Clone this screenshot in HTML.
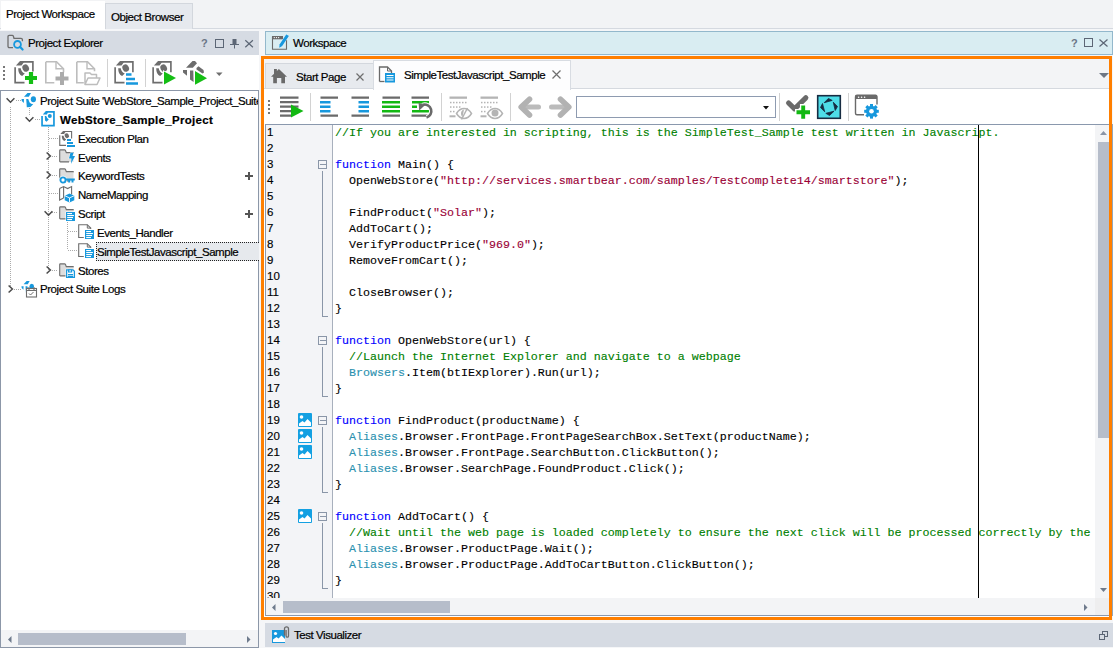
<!DOCTYPE html>
<html><head><meta charset="utf-8">
<style>
*{margin:0;padding:0;box-sizing:border-box}
html,body{width:1113px;height:648px;overflow:hidden;background:#F5F6F8;font-family:"Liberation Sans",sans-serif;font-size:11px;color:#000}
.a{position:absolute}
svg{position:absolute;overflow:visible}
.code{font-family:"Liberation Mono",monospace;font-size:11.67px;white-space:pre;line-height:16px;-webkit-text-stroke:0.12px currentColor}
.u{font-size:11.5px;letter-spacing:-0.45px;-webkit-text-stroke:0.2px #000}
.c{color:#008000}.k{color:#0000FF}.s{color:#9A0036}.t{color:#2B91AF}
</style></head><body>

<div class="a" style="left:0;top:0;width:1113px;height:29px;background:#F2F3F5;border-bottom:1px solid #D5D9E0"></div>
<div class="a" style="left:1px;top:1px;width:104px;height:29px;background:#fff"></div>
<div class="a u" style="left:6px;top:8px">Project Workspace</div>
<div class="a" style="left:105px;top:3px;width:88px;height:26px;background:#E6E9EE;border:1px solid #D3D7DD;border-bottom:none"></div>
<div class="a u" style="left:111px;top:11px">Object Browser</div>
<div class="a" style="left:0;top:31px;width:259px;height:24px;background:#D6DBE3"></div>
<div class="a u" style="left:28px;top:37px">Project Explorer</div>
<div class="a" style="left:0;top:55px;width:259px;height:35px;background:#fff"></div>
<div class="a" style="left:0;top:90px;width:259px;height:558px;background:#fff;border:1px solid #8C97A8"></div>
<svg style="left:7px;top:35px" width="16" height="16" viewBox="0 0 16 16"><path d="M6 12.6H2.4Q1 12.6 1 11.2V1.6Q1 0.3 2.3 0.3H5.3Q6 0.3 6.3 1L7 3.3H14Q15.4 3.3 15.4 4.7V6.2" fill="none" stroke="#6D6D6D" stroke-width="1.3"/><circle cx="10.5" cy="9.4" r="3.4" fill="none" stroke="#1798DD" stroke-width="1.8"/><path d="M12.9 11.8l2.7 2.7" stroke="#1798DD" stroke-width="2.2" stroke-linecap="round"/></svg>
<div class="a" style="left:201px;top:37px;color:#6B7585;font-size:11px;font-weight:bold">?</div>
<svg style="left:215px;top:39px" width="10" height="10"><rect x="0.5" y="0.5" width="8" height="8" fill="none" stroke="#5C6675" stroke-width="1"/></svg>
<svg style="left:230px;top:39px" width="10" height="10"><rect x="2.5" y="0" width="4" height="5" fill="#5C6675"/><path d="M0 5.5h9M4.5 5v4.5" stroke="#5C6675" stroke-width="1"/></svg>
<svg style="left:245px;top:40px" width="9" height="8"><path d="M0.3 0.3l7.6 7M7.9 0.3l-7.6 7" stroke="#5C6675" stroke-width="1.2"/></svg>
<div class="a" style="left:3px;top:66px;width:2px;height:2px;background:#777"></div>
<div class="a" style="left:3px;top:70px;width:2px;height:2px;background:#777"></div>
<div class="a" style="left:3px;top:74px;width:2px;height:2px;background:#777"></div>
<div class="a" style="left:3px;top:78px;width:2px;height:2px;background:#777"></div>
<svg style="left:14px;top:61px;color:#6D6D6D" width="26" height="26" viewBox="0 0 26 26"><svg x="0" y="0" width="24" height="24" viewBox="0 0 16 16" style="position:static;overflow:visible"><path d="M4 0.55H12.6V7.5" fill="none" stroke="currentColor" stroke-width="1.1"/><path d="M1.3 3L4 0H7.2L5 3z" fill="currentColor"/><path d="M0.75 4.2V14.4H7" fill="none" stroke="currentColor" stroke-width="1.1"/><ellipse cx="7.8" cy="4.7" rx="2.1" ry="2.5" transform="rotate(-30 7.8 4.7)" fill="currentColor"/><path d="M2.8 4.8H4.5Q4.9 7.4 7.2 8.4L5.4 10Q2.8 9.2 2.8 4.8z" fill="currentColor"/></svg><path d="M19 10.5v13M12.5 17h13" stroke="#fff" stroke-width="6"/><path d="M17 11v12M11 17h12" stroke="#14BE14" stroke-width="4.2"/></svg>
<svg style="left:45px;top:61px" width="26" height="25" viewBox="0 0 26 25"><path d="M1 0.8h10.5l7 7v3.5M0.8 0.8v21h8.5" fill="none" stroke="#BDBDBD" stroke-width="1.6"/><path d="M11 0.8v7h7" fill="none" stroke="#BDBDBD" stroke-width="1.4"/><path d="M17 11v13M10.5 17.5h13" stroke="#ABABAB" stroke-width="4"/></svg>
<svg style="left:76px;top:61px" width="26" height="25" viewBox="0 0 26 25"><path d="M1 0.8h10.5l7 7v2.5M0.8 0.8v21h7" fill="none" stroke="#BDBDBD" stroke-width="1.6"/><path d="M11 0.8v7h7" fill="none" stroke="#BDBDBD" stroke-width="1.4"/><path d="M9 23.5V12h5l1.5 1.5h5v3M9 23.5l3-6.5h12l-3 6.5z" fill="#fff" stroke="#BDBDBD" stroke-width="1.5" stroke-linejoin="round"/></svg>
<div class="a" style="left:107px;top:59px;width:1px;height:28px;background:#D2D2D2"></div>
<svg style="left:114px;top:61px;color:#6D6D6D" width="26" height="26" viewBox="0 0 26 26"><svg x="0" y="0" width="24" height="24" viewBox="0 0 16 16" style="position:static;overflow:visible"><path d="M4 0.55H12.6V7.5" fill="none" stroke="currentColor" stroke-width="1.1"/><path d="M1.3 3L4 0H7.2L5 3z" fill="currentColor"/><path d="M0.75 4.2V14.4H7" fill="none" stroke="currentColor" stroke-width="1.1"/><ellipse cx="7.8" cy="4.7" rx="2.1" ry="2.5" transform="rotate(-30 7.8 4.7)" fill="currentColor"/><path d="M2.8 4.8H4.5Q4.9 7.4 7.2 8.4L5.4 10Q2.8 9.2 2.8 4.8z" fill="currentColor"/></svg><path d="M12 13.5h5.5M12 18h9M12 22.5h12" stroke="#1798DD" stroke-width="2.6"/></svg>
<div class="a" style="left:145px;top:59px;width:1px;height:28px;background:#D2D2D2"></div>
<svg style="left:152px;top:61px;color:#6D6D6D" width="26" height="26" viewBox="0 0 26 26"><svg x="0" y="0" width="24" height="24" viewBox="0 0 16 16" style="position:static;overflow:visible"><path d="M4 0.55H12.6V7.5" fill="none" stroke="currentColor" stroke-width="1.1"/><path d="M1.3 3L4 0H7.2L5 3z" fill="currentColor"/><path d="M0.75 4.2V14.4H7" fill="none" stroke="currentColor" stroke-width="1.1"/><ellipse cx="7.8" cy="4.7" rx="2.1" ry="2.5" transform="rotate(-30 7.8 4.7)" fill="currentColor"/><path d="M2.8 4.8H4.5Q4.9 7.4 7.2 8.4L5.4 10Q2.8 9.2 2.8 4.8z" fill="currentColor"/></svg><path d="M11 9l14 8-14 8z" fill="#fff"/><path d="M12 10.5l12 6.5-12 6.5z" fill="#14BE14"/></svg>
<svg style="left:180px;top:58px" width="30" height="30" viewBox="0 0 30 30"><path d="M6 9.7L12.5 3H15L17 5.3 12.8 9.7z" fill="#6D6D6D"/><path d="M3 12H7V17.8L3 14.5z" fill="#6D6D6D"/><path d="M10 12.5H13.3L13.6 24 10 21.5z" fill="#6D6D6D"/><path d="M16.5 10L18.5 8.2 23.5 12 24 14.5 22.5 15.5 16.5 11.5z" fill="#6D6D6D"/><path d="M15 13L27 20.3 15 26.8z" fill="#14BE14"/></svg>
<svg style="left:216px;top:72px" width="7" height="5"><path d="M0 0.5h6.5L3.25 4z" fill="#6E6E6E"/></svg>
<div class="a" style="left:10px;top:107px;width:1px;height:182px;background:repeating-linear-gradient(#ABABAB 0 1px,transparent 1px 2px)"></div>
<div class="a" style="left:29px;top:108px;width:1px;height:8px;background:repeating-linear-gradient(#ABABAB 0 1px,transparent 1px 2px)"></div>
<div class="a" style="left:48px;top:127px;width:1px;height:144px;background:repeating-linear-gradient(#ABABAB 0 1px,transparent 1px 2px)"></div>
<div class="a" style="left:67px;top:222px;width:1px;height:28px;background:repeating-linear-gradient(#ABABAB 0 1px,transparent 1px 2px)"></div>
<div class="a" style="left:16px;top:100px;width:5px;height:1px;background:repeating-linear-gradient(90deg,#ABABAB 0 1px,transparent 1px 2px)"></div>
<div class="a" style="left:35px;top:119px;width:5px;height:1px;background:repeating-linear-gradient(90deg,#ABABAB 0 1px,transparent 1px 2px)"></div>
<div class="a" style="left:49px;top:138px;width:9px;height:1px;background:repeating-linear-gradient(90deg,#ABABAB 0 1px,transparent 1px 2px)"></div>
<div class="a" style="left:52px;top:156px;width:6px;height:1px;background:repeating-linear-gradient(90deg,#ABABAB 0 1px,transparent 1px 2px)"></div>
<div class="a" style="left:52px;top:175px;width:6px;height:1px;background:repeating-linear-gradient(90deg,#ABABAB 0 1px,transparent 1px 2px)"></div>
<div class="a" style="left:49px;top:193px;width:9px;height:1px;background:repeating-linear-gradient(90deg,#ABABAB 0 1px,transparent 1px 2px)"></div>
<div class="a" style="left:52px;top:212px;width:6px;height:1px;background:repeating-linear-gradient(90deg,#ABABAB 0 1px,transparent 1px 2px)"></div>
<div class="a" style="left:52px;top:270px;width:6px;height:1px;background:repeating-linear-gradient(90deg,#ABABAB 0 1px,transparent 1px 2px)"></div>
<div class="a" style="left:68px;top:231px;width:10px;height:1px;background:repeating-linear-gradient(90deg,#ABABAB 0 1px,transparent 1px 2px)"></div>
<div class="a" style="left:68px;top:250px;width:10px;height:1px;background:repeating-linear-gradient(90deg,#ABABAB 0 1px,transparent 1px 2px)"></div>
<div class="a" style="left:14px;top:289px;width:7px;height:1px;background:repeating-linear-gradient(90deg,#ABABAB 0 1px,transparent 1px 2px)"></div>
<svg style="left:6px;top:98px" width="9" height="5"><svg x="0" y="0" width="100%" height="100%" viewBox="0 0 9 5" style="position:static;overflow:visible"><path d="M0.6 0.3l3.9 3.9 3.9-3.9" fill="none" stroke="#4A4A4A" stroke-width="1.5"/></svg></svg>
<svg style="left:25px;top:117px" width="9" height="5"><svg x="0" y="0" width="100%" height="100%" viewBox="0 0 9 5" style="position:static;overflow:visible"><path d="M0.6 0.3l3.9 3.9 3.9-3.9" fill="none" stroke="#4A4A4A" stroke-width="1.5"/></svg></svg>
<svg style="left:46px;top:152px" width="5" height="8"><svg x="0" y="0" width="100%" height="100%" viewBox="0 0 5 8" style="position:static;overflow:visible"><path d="M0.6 0.5l3.8 3.5-3.8 3.5" fill="none" stroke="#4A4A4A" stroke-width="1.5"/></svg></svg>
<svg style="left:46px;top:171px" width="5" height="8"><svg x="0" y="0" width="100%" height="100%" viewBox="0 0 5 8" style="position:static;overflow:visible"><path d="M0.6 0.5l3.8 3.5-3.8 3.5" fill="none" stroke="#4A4A4A" stroke-width="1.5"/></svg></svg>
<svg style="left:44px;top:211px" width="9" height="5"><svg x="0" y="0" width="100%" height="100%" viewBox="0 0 9 5" style="position:static;overflow:visible"><path d="M0.6 0.3l3.9 3.9 3.9-3.9" fill="none" stroke="#4A4A4A" stroke-width="1.5"/></svg></svg>
<svg style="left:46px;top:266px" width="5" height="8"><svg x="0" y="0" width="100%" height="100%" viewBox="0 0 5 8" style="position:static;overflow:visible"><path d="M0.6 0.5l3.8 3.5-3.8 3.5" fill="none" stroke="#4A4A4A" stroke-width="1.5"/></svg></svg>
<svg style="left:8px;top:285px" width="5" height="8"><svg x="0" y="0" width="100%" height="100%" viewBox="0 0 5 8" style="position:static;overflow:visible"><path d="M0.6 0.5l3.8 3.5-3.8 3.5" fill="none" stroke="#4A4A4A" stroke-width="1.5"/></svg></svg>
<svg style="left:21px;top:93px;color:#1798DD" width="15" height="15" viewBox="0 0 15 15"><svg x="0" y="0" width="100%" height="100%" viewBox="0 0 15 15" style="position:static;overflow:visible"><path d="M3 3.8L6.5 0H10L7.8 3.8z" fill="currentColor"/><path d="M0.5 6H3L2.8 10 0.8 8z" fill="currentColor"/><path d="M5.2 6H7.2L8.6 9.4Q9.8 10.8 12.2 11.3L9.4 14 5.8 14.3z" fill="currentColor"/><ellipse cx="12.4" cy="6.2" rx="2.6" ry="3" fill="currentColor"/></svg></svg>
<svg style="left:41px;top:111px" width="15" height="16" viewBox="0 0 15 16"><path d="M4.9 0.95H12.95V14.65H1.05V5" fill="none" stroke="#1798DD" stroke-width="1.7"/><path d="M1.8 3.6L4.9 0.1H7.5L6 3.5z" fill="#1798DD"/><path d="M3.8 5H5.2Q6 7.5 7.8 8.5L5.5 10.7 4 9.5z" fill="#1798DD"/><ellipse cx="8.8" cy="5" rx="2" ry="2.1" fill="#1798DD"/></svg>
<svg style="left:59px;top:131px;color:#6D6D6D" width="17" height="17" viewBox="0 0 17 17"><svg x="0" y="0" width="16" height="16" viewBox="0 0 16 16" style="position:static;overflow:visible"><path d="M4 0.55H12.6V7.5" fill="none" stroke="currentColor" stroke-width="1.1"/><path d="M1.3 3L4 0H7.2L5 3z" fill="currentColor"/><path d="M0.75 4.2V14.4H7" fill="none" stroke="currentColor" stroke-width="1.1"/><ellipse cx="7.8" cy="4.7" rx="2.1" ry="2.5" transform="rotate(-30 7.8 4.7)" fill="currentColor"/><path d="M2.8 4.8H4.5Q4.9 7.4 7.2 8.4L5.4 10Q2.8 9.2 2.8 4.8z" fill="currentColor"/></svg><path d="M8 9h4M8 12h6M8 15h8" stroke="#1798DD" stroke-width="1.8"/></svg>
<svg style="left:59px;top:149px" width="16" height="16" viewBox="0 0 16 16"><svg x="0" y="0" width="100%" height="100%" viewBox="0 0 16 16" style="position:static;overflow:visible"><path d="M0.7 12.9V1.5Q0.7 0.9 1.3 0.9H5.6Q6.2 0.9 6.5 1.5L7.3 3.6H13.8Q14.5 3.6 14.5 4.3V12.9z" fill="#DDDDDD"/><path d="M14.5 4.3Q14.5 3.6 13.8 3.6H7.3L6.5 1.5Q6.2 0.9 5.6 0.9H1.3Q0.7 0.9 0.7 1.5V12.3Q0.7 12.9 1.3 12.9H10" fill="none" stroke="#6D6D6D" stroke-width="1.1"/></svg><path d="M11.5 3.8H14.5L13.5 7H16L12 14.8 12.5 9.5H10z" fill="#1798DD" stroke="#fff" stroke-width="0.9" stroke-linejoin="round"/><path d="M11.5 3.8H14.5L13.5 7H16L12 14.8 12.5 9.5H10z" fill="#1798DD"/></svg>
<svg style="left:59px;top:168px" width="16" height="16" viewBox="0 0 16 16"><svg x="0" y="0" width="100%" height="100%" viewBox="0 0 16 16" style="position:static;overflow:visible"><path d="M0.7 12.9V1.5Q0.7 0.9 1.3 0.9H5.6Q6.2 0.9 6.5 1.5L7.3 3.6H13.8Q14.5 3.6 14.5 4.3V12.9z" fill="#DDDDDD"/><path d="M14.5 4.3Q14.5 3.6 13.8 3.6H7.3L6.5 1.5Q6.2 0.9 5.6 0.9H1.3Q0.7 0.9 0.7 1.5V12.3Q0.7 12.9 1.3 12.9H10" fill="none" stroke="#6D6D6D" stroke-width="1.1"/></svg><circle cx="4" cy="12" r="3" fill="#fff" stroke="#fff" stroke-width="2.5"/><circle cx="4" cy="12" r="2.6" fill="#fff" stroke="#1798DD" stroke-width="1.9"/><path d="M6.5 11.5h9.3M10.2 11.5v3M13.5 11.5v3" stroke="#1798DD" stroke-width="2"/></svg>
<svg style="left:59px;top:186px" width="16" height="16" viewBox="0 0 16 16"><path d="M0.6 2.6l4-2 4 2 4-2v8M0.6 2.6V14l4-2M4.6 0.6v11.4" fill="none" stroke="#6D6D6D" stroke-width="1.1"/><path d="M10.5 7.5l4.8 2.2v4.6l-4.8 2.2-4.8-2.2V9.7z" fill="#1798DD"/><path d="M5.7 9.7l4.8 2.2 4.8-2.2M10.5 11.9v4.4" stroke="#fff" stroke-width="0.9" fill="none"/></svg>
<svg style="left:59px;top:206px" width="16" height="16" viewBox="0 0 16 16"><svg x="0" y="0" width="100%" height="100%" viewBox="0 0 16 16" style="position:static;overflow:visible"><path d="M0.7 12.9V1.5Q0.7 0.9 1.3 0.9H5.6Q6.2 0.9 6.5 1.5L7.3 3.6H13.8Q14.5 3.6 14.5 4.3V12.9z" fill="#DDDDDD"/><path d="M14.5 4.3Q14.5 3.6 13.8 3.6H7.3L6.5 1.5Q6.2 0.9 5.6 0.9H1.3Q0.7 0.9 0.7 1.5V12.3Q0.7 12.9 1.3 12.9H10" fill="none" stroke="#6D6D6D" stroke-width="1.1"/></svg><rect x="6.5" y="5.5" width="10" height="10" fill="#fff"/><rect x="7" y="6" width="9" height="9" fill="#1798DD"/><rect x="8.2" y="7" width="4.8" height="1.1" fill="#fff"/><rect x="8.2" y="9" width="6.7" height="1.1" fill="#fff"/><rect x="8.2" y="11" width="5.8" height="1.1" fill="#fff"/><rect x="8.2" y="13" width="4.8" height="1.1" fill="#fff"/></svg>
<svg style="left:78px;top:224px" width="16" height="16" viewBox="0 0 16 16"><svg x="0" y="0" width="100%" height="100%" viewBox="0 0 16 16" style="position:static;overflow:visible"><path d="M5.8 13.5H0.7V0.7H9.3L12.7 4.1V5" fill="#fff" stroke="#6D6D6D" stroke-width="1.1"/><path d="M9.3 0.7V4.1H12.7" fill="none" stroke="#6D6D6D" stroke-width="1"/><rect x="6.5" y="5.5" width="10" height="10" fill="#fff"/><rect x="7" y="6" width="9" height="9" fill="#1798DD"/><rect x="8.2" y="7" width="4.8" height="1.1" fill="#fff"/><rect x="8.2" y="9" width="6.7" height="1.1" fill="#fff"/><rect x="8.2" y="11" width="5.8" height="1.1" fill="#fff"/><rect x="8.2" y="13" width="4.8" height="1.1" fill="#fff"/></svg></svg>
<svg style="left:78px;top:243px" width="16" height="16" viewBox="0 0 16 16"><svg x="0" y="0" width="100%" height="100%" viewBox="0 0 16 16" style="position:static;overflow:visible"><path d="M5.8 13.5H0.7V0.7H9.3L12.7 4.1V5" fill="#fff" stroke="#6D6D6D" stroke-width="1.1"/><path d="M9.3 0.7V4.1H12.7" fill="none" stroke="#6D6D6D" stroke-width="1"/><rect x="6.5" y="5.5" width="10" height="10" fill="#fff"/><rect x="7" y="6" width="9" height="9" fill="#1798DD"/><rect x="8.2" y="7" width="4.8" height="1.1" fill="#fff"/><rect x="8.2" y="9" width="6.7" height="1.1" fill="#fff"/><rect x="8.2" y="11" width="5.8" height="1.1" fill="#fff"/><rect x="8.2" y="13" width="4.8" height="1.1" fill="#fff"/></svg></svg>
<svg style="left:59px;top:263px" width="16" height="16" viewBox="0 0 16 16"><svg x="0" y="0" width="100%" height="100%" viewBox="0 0 16 16" style="position:static;overflow:visible"><path d="M0.7 12.9V1.5Q0.7 0.9 1.3 0.9H5.6Q6.2 0.9 6.5 1.5L7.3 3.6H13.8Q14.5 3.6 14.5 4.3V12.9z" fill="#DDDDDD"/><path d="M14.5 4.3Q14.5 3.6 13.8 3.6H7.3L6.5 1.5Q6.2 0.9 5.6 0.9H1.3Q0.7 0.9 0.7 1.5V12.3Q0.7 12.9 1.3 12.9H10" fill="none" stroke="#6D6D6D" stroke-width="1.1"/></svg><rect x="6.5" y="5.8" width="10" height="9.7" fill="#fff"/><path d="M7.6 6.9H14L15.4 8.3V14.4H7.6z" fill="none" stroke="#1798DD" stroke-width="1.3"/><rect x="9" y="6.5" width="4.2" height="3" fill="#1798DD"/><rect x="10.6" y="7" width="1" height="1.8" fill="#fff"/><path d="M9 11.5H14" stroke="#1798DD" stroke-width="1"/><rect x="9" y="12.6" width="5" height="1.4" fill="#1798DD"/></svg>
<svg style="left:21px;top:281px" width="17" height="17" viewBox="0 0 17 17"><g style="color:#1798DD"><svg x="0" y="0" width="13" height="13" viewBox="0 0 15 15" style="position:static;overflow:visible"><path d="M3 3.8L6.5 0H10L7.8 3.8z" fill="currentColor"/><path d="M0.5 6H3L2.8 10 0.8 8z" fill="currentColor"/><path d="M5.2 6H7.2L8.6 9.4Q9.8 10.8 12.2 11.3L9.4 14 5.8 14.3z" fill="currentColor"/><ellipse cx="12.4" cy="6.2" rx="2.6" ry="3" fill="currentColor"/></svg></g><rect x="5.5" y="7.5" width="10" height="8.5" fill="#fff" stroke="#6D6D6D" stroke-width="1.1"/><path d="M5.5 9.5h10M8 6v3M13 6v3" stroke="#6D6D6D" stroke-width="1.1"/><path d="M8 12.5l1.5 1.5 3-3" fill="none" stroke="#6D6D6D" stroke-width="1"/></svg>
<div class="a" style="left:96px;top:242px;width:163px;height:19px;background:#E6E9ED;border:1px dotted #222;border-right:none"></div>
<svg style="left:245px;top:172px" width="8" height="8"><path d="M0 3h8v2H0zM3 0h2v8H3z" fill="#555"/></svg>
<svg style="left:245px;top:210px" width="8" height="8"><path d="M0 3h8v2H0zM3 0h2v8H3z" fill="#555"/></svg>
<div class="a" style="left:1px;top:92px;width:257px;height:210px;overflow:hidden">
<div class="a u" style="left:39px;top:0px;line-height:19px;white-space:nowrap;">Project Suite 'WebStore_Sample_Project_Suite'</div>
<div class="a u" style="left:59px;top:19px;line-height:19px;white-space:nowrap;font-weight:bold;letter-spacing:0.3px;">WebStore_Sample_Project</div>
<div class="a u" style="left:77px;top:38px;line-height:19px;white-space:nowrap;">Execution Plan</div>
<div class="a u" style="left:77px;top:57px;line-height:19px;white-space:nowrap;">Events</div>
<div class="a u" style="left:77px;top:75px;line-height:19px;white-space:nowrap;">KeywordTests</div>
<div class="a u" style="left:77px;top:94px;line-height:19px;white-space:nowrap;">NameMapping</div>
<div class="a u" style="left:77px;top:113px;line-height:19px;white-space:nowrap;">Script</div>
<div class="a u" style="left:96px;top:132px;line-height:19px;white-space:nowrap;">Events_Handler</div>
<div class="a u" style="left:96px;top:151px;line-height:19px;white-space:nowrap;">SimpleTestJavascript_Sample</div>
<div class="a u" style="left:77px;top:170px;line-height:19px;white-space:nowrap;">Stores</div>
<div class="a u" style="left:39px;top:188px;line-height:19px;white-space:nowrap;">Project Suite Logs</div>
</div>
<div class="a" style="left:1px;top:630px;width:257px;height:17px;background:#F3F4F6"></div>
<div class="a" style="left:18px;top:633px;width:168px;height:12px;background:#B6BDCA"></div>
<svg style="left:8px;top:636px" width="4" height="7"><path d="M3.5 0v7L0 3.5z" fill="#6E7A8C"/></svg>
<svg style="left:247px;top:636px" width="4" height="7"><path d="M0 0v7l3.5-3.5z" fill="#6E7A8C"/></svg>
<!-- workspace header -->
<div class="a" style="left:265px;top:31px;width:848px;height:24px;background:#D9EDF2;border:1px solid #93B8CC"></div>
<svg style="left:272px;top:34px" width="18" height="16" viewBox="0 0 18 16"><path d="M0.5 2.5V15.3H14.5V6" fill="none" stroke="#6A6A6A" stroke-width="1.1"/><rect x="0" y="2" width="11" height="3.3" fill="#6A6A6A"/><circle cx="2.3" cy="3.6" r="0.65" fill="#fff"/><circle cx="4.5" cy="3.6" r="0.65" fill="#fff"/><circle cx="6.6" cy="3.6" r="0.65" fill="#fff"/><path d="M14.3 0.5L16.8 2.1L10.1 12L7.3 13.8L7.6 10.6z" fill="#1798DD" stroke="#E2F3F7" stroke-width="0.8" stroke-linejoin="round"/><path d="M14.3 0.5L16.8 2.1L10.1 12L7.3 13.8L7.6 10.6z" fill="#1798DD"/></svg>
<div class="a u" style="left:293px;top:37px">Workspace</div>
<div class="a" style="left:1071px;top:37px;color:#6B7585;font-size:11px;font-weight:bold">?</div>
<svg style="left:1084px;top:38px" width="10" height="10"><rect x="0.5" y="0.5" width="8" height="8" fill="none" stroke="#5C6675" stroke-width="1"/></svg>
<svg style="left:1099px;top:39px" width="9" height="8"><path d="M0.5 0.5l8 7M8.5 0.5l-8 7" stroke="#5C6675" stroke-width="1.2"/></svg>
<div class="a" style="left:261px;top:56px;width:851px;height:564px;border:3px solid #FF7F00;background:#fff"></div>
<div class="a" style="left:1112px;top:124px;width:1px;height:492px;background:#93A6BA"></div>
<div class="a" style="left:264px;top:59px;width:845px;height:30px;background:#F3F4F6;border-bottom:1px solid #D5D9DF"></div>
<div class="a" style="left:265px;top:63px;width:109px;height:25px;background:#E7EAEE;border:1px solid #D3D7DD;border-bottom:none"></div>
<svg style="left:271px;top:68px" width="17" height="16" viewBox="0 0 17 16"><path d="M0 8.8L7.9 1 16 8.8H14V15.3H10.3V10H5.9V15.3H2.2V8.8z M3 1H5.9V4L3 6.8z" fill="#6A6A6A"/></svg>
<div class="a u" style="left:296px;top:71px">Start Page</div>
<svg style="left:356px;top:73px" width="8" height="8"><path d="M0.5 0.5l7 7M7.5 0.5l-7 7" stroke="#6E6E6E" stroke-width="1.2"/></svg>
<div class="a" style="left:373px;top:60px;width:198px;height:29px;background:#FDFDFE;border:1px solid #D8DCE2;border-bottom:none"></div>
<svg style="left:378px;top:66px" width="18" height="17" viewBox="0 0 18 17"><path d="M1.5 15.5V1h8l4 4v2.5" fill="none" stroke="#6A6A6A" stroke-width="1.3"/><path d="M9.5 1v4h4" fill="none" stroke="#6A6A6A" stroke-width="1"/><path d="M1.5 15.5h5" stroke="#6A6A6A" stroke-width="1.3"/><rect x="7" y="7" width="10" height="9.5" fill="#1798DD"/><path d="M8.5 9.5h7M8.5 11.8h7M8.5 14h7" stroke="#fff" stroke-width="1.1"/></svg>
<div class="a u" style="left:404px;top:69px">SimpleTestJavascript_Sample</div>
<svg style="left:552px;top:70px" width="9" height="9"><path d="M0.5 0.5l8 8M8.5 0.5l-8 8" stroke="#6E6E6E" stroke-width="1.2"/></svg>
<svg style="left:1099px;top:73px" width="10" height="6"><path d="M0 0h10L5 5z" fill="#6E7785"/></svg>
<div class="a" style="left:264px;top:89px;width:845px;height:35px;background:#fff"></div>
<div class="a" style="left:373px;top:88px;width:198px;height:2px;background:#FDFDFE;border-left:1px solid #D8DCE2;border-right:1px solid #D8DCE2"></div>
<div class="a" style="left:268px;top:100px;width:2px;height:2px;background:#777"></div>
<div class="a" style="left:268px;top:104px;width:2px;height:2px;background:#777"></div>
<div class="a" style="left:268px;top:108px;width:2px;height:2px;background:#777"></div>
<div class="a" style="left:268px;top:112px;width:2px;height:2px;background:#777"></div>
<svg style="left:280px;top:95px" width="24" height="24" viewBox="0 0 24 24"><path d="M0 2.65h18.5M0 7.15h18.5M0 11.65h18.5M0 16.15h11M0 20.65h11" stroke="#6A6A6A" stroke-width="2.3"/><path d="M11 9.5l12.5 6.5-12.5 6.5z" fill="#12B812"/></svg>
<div class="a" style="left:310px;top:93px;width:1px;height:28px;background:#D2D2D2"></div>
<svg style="left:320px;top:95px" width="24" height="24" viewBox="0 0 24 24"><path d="M0.5 2.65h17.5M0.5 20.65h17.5" stroke="#6A6A6A" stroke-width="2.4"/><path d="M0 7.15h10.5M0 11.65h10.5M0 16.15h10.5" stroke="#1798DD" stroke-width="2.5"/></svg>
<svg style="left:351px;top:95px" width="24" height="24" viewBox="0 0 24 24"><path d="M0.5 2.65h17.5M0.5 20.65h17.5" stroke="#6A6A6A" stroke-width="2.4"/><path d="M7.5 7.15h10.5M7.5 11.65h10.5M7.5 16.15h10.5" stroke="#1798DD" stroke-width="2.5"/></svg>
<svg style="left:382px;top:95px" width="24" height="24" viewBox="0 0 24 24"><path d="M0.5 2.65h17.5M0.5 20.65h17.5" stroke="#6A6A6A" stroke-width="2.4"/><path d="M0 7.15h18M0 11.65h18M0 16.15h18" stroke="#12B812" stroke-width="2.5"/></svg>
<svg style="left:411px;top:95px" width="24" height="24" viewBox="0 0 24 24"><path d="M0.5 2.65h17.5M0.5 20.65h17.5" stroke="#6A6A6A" stroke-width="2.4"/><path d="M1 7.15h17M1 11.65h17M1 16.15h17" stroke="#12B812" stroke-width="2.5"/><rect x="6" y="9.5" width="13" height="4.5" fill="#fff"/><path d="M11.8 9.8A6 6 0 1 1 15.5 22.6" fill="none" stroke="#fff" stroke-width="4.5"/><path d="M11.8 9.8A6 6 0 1 1 15.5 22.6" fill="none" stroke="#6A6A6A" stroke-width="2.6"/><path d="M7.6 7.8L8.2 15.6 14.2 10z" fill="#6A6A6A"/></svg>
<div class="a" style="left:441px;top:93px;width:1px;height:28px;background:#D2D2D2"></div>
<svg style="left:449px;top:96px" width="24" height="24" viewBox="0 0 24 24"><path d="M0.5 1.65h17.5" stroke="#B4B4B4" stroke-width="2.3"/><rect x="1" y="5.8" width="1.5" height="1.5" fill="#B4B4B4"/><rect x="4" y="5.8" width="1.5" height="1.5" fill="#B4B4B4"/><rect x="7" y="5.8" width="1.5" height="1.5" fill="#B4B4B4"/><rect x="10" y="5.8" width="1.5" height="1.5" fill="#B4B4B4"/><rect x="13" y="5.8" width="1.5" height="1.5" fill="#B4B4B4"/><rect x="16" y="5.8" width="1.5" height="1.5" fill="#B4B4B4"/><rect x="1" y="10.3" width="1.5" height="1.5" fill="#B4B4B4"/><rect x="4" y="10.3" width="1.5" height="1.5" fill="#B4B4B4"/><rect x="7" y="10.3" width="1.5" height="1.5" fill="#B4B4B4"/><rect x="10" y="10.3" width="1.5" height="1.5" fill="#B4B4B4"/><rect x="1" y="14.8" width="1.5" height="1.5" fill="#B4B4B4"/><rect x="4" y="14.8" width="1.5" height="1.5" fill="#B4B4B4"/><path d="M0.5 20.3h6" stroke="#B4B4B4" stroke-width="2"/><path d="M7.5 17.5c2-3.3 4.6-5 7.5-5s5.5 1.7 7.5 5c-2 3.3-4.6 5-7.5 5s-5.5-1.7-7.5-5z" fill="#fff" stroke="#fff" stroke-width="3"/><path d="M7.5 17.5c2-3.3 4.6-5 7.5-5s5.5 1.7 7.5 5c-2 3.3-4.6 5-7.5 5s-5.5-1.7-7.5-5z" fill="none" stroke="#B4B4B4" stroke-width="1.5"/><path d="M15 13.5c-2 0.5-3 2-3 4s0.8 3 1.5 3.5z" fill="#B4B4B4"/><path d="M18.5 12L12.5 23.5" stroke="#B4B4B4" stroke-width="1.5"/></svg>
<svg style="left:480px;top:96px" width="24" height="24" viewBox="0 0 24 24"><path d="M0.5 1.65h17.5" stroke="#B4B4B4" stroke-width="2.3"/><rect x="1" y="5.8" width="1.5" height="1.5" fill="#B4B4B4"/><rect x="4" y="5.8" width="1.5" height="1.5" fill="#B4B4B4"/><rect x="7" y="5.8" width="1.5" height="1.5" fill="#B4B4B4"/><rect x="10" y="5.8" width="1.5" height="1.5" fill="#B4B4B4"/><rect x="13" y="5.8" width="1.5" height="1.5" fill="#B4B4B4"/><rect x="16" y="5.8" width="1.5" height="1.5" fill="#B4B4B4"/><rect x="1" y="10.3" width="1.5" height="1.5" fill="#B4B4B4"/><rect x="4" y="10.3" width="1.5" height="1.5" fill="#B4B4B4"/><rect x="7" y="10.3" width="1.5" height="1.5" fill="#B4B4B4"/><rect x="10" y="10.3" width="1.5" height="1.5" fill="#B4B4B4"/><rect x="1" y="14.8" width="1.5" height="1.5" fill="#B4B4B4"/><rect x="4" y="14.8" width="1.5" height="1.5" fill="#B4B4B4"/><path d="M0.5 20.3h6" stroke="#B4B4B4" stroke-width="2"/><path d="M7.5 17.5c2-3.3 4.6-5 7.5-5s5.5 1.7 7.5 5c-2 3.3-4.6 5-7.5 5s-5.5-1.7-7.5-5z" fill="#fff" stroke="#fff" stroke-width="3"/><path d="M7.5 17.5c2-3.3 4.6-5 7.5-5s5.5 1.7 7.5 5c-2 3.3-4.6 5-7.5 5s-5.5-1.7-7.5-5z" fill="none" stroke="#B4B4B4" stroke-width="1.5"/><circle cx="15" cy="17" r="3.5" fill="#B4B4B4"/></svg>
<div class="a" style="left:510px;top:93px;width:1px;height:28px;background:#D2D2D2"></div>
<svg style="left:518px;top:97px" width="23" height="22" viewBox="0 0 23 22"><path d="M20.5 10H8" fill="none" stroke="#BBBBBB" stroke-width="5" stroke-linecap="round"/><path d="M11.5 2.2L3.2 10l8.3 8" fill="none" stroke="#B2B2B2" stroke-width="5.6" stroke-linejoin="round" stroke-linecap="round"/></svg>
<svg style="left:549px;top:97px" width="23" height="22" viewBox="0 0 23 22"><path d="M2.5 10H15" fill="none" stroke="#BBBBBB" stroke-width="5" stroke-linecap="round"/><path d="M11.5 2.2L19.8 10l-8.3 8" fill="none" stroke="#B2B2B2" stroke-width="5.6" stroke-linejoin="round" stroke-linecap="round"/></svg>
<div class="a" style="left:576px;top:96px;width:200px;height:22px;background:#fff;border:1px solid #8E9BB0"></div>
<svg style="left:763px;top:106px" width="6" height="4"><path d="M0 0h6L3 3.5z" fill="#111"/></svg>
<div class="a" style="left:779px;top:93px;width:1px;height:28px;background:#D2D2D2"></div>
<svg style="left:786px;top:95px" width="25" height="25" viewBox="0 0 25 25"><path d="M2.6 8l6 5.8L19.8 2.8" fill="none" stroke="#6A6A6A" stroke-width="5.2" stroke-linejoin="round" stroke-linecap="round"/><path d="M17.2 9v16M9 17.3h16" stroke="#fff" stroke-width="6.5"/><path d="M17.2 10.5v13.2M10.5 17.3h13.5" stroke="#12B812" stroke-width="3.9"/></svg>
<svg style="left:815px;top:93px" width="28" height="28" viewBox="0 0 28 28"><rect x="2.7" y="2.7" width="22.6" height="22.6" fill="#4EDDE8" stroke="#172C42" stroke-width="1.6"/><path d="M9.2 9.7L13.4 5.4 17.2 7.4z M18.3 9.2L22.5 13.5 20.2 17.5z M19 18.2L14.5 22.5 10.8 20.3z M9.7 18.8L5.5 14.5 7.5 10.5z" fill="#172C42" stroke="#172C42" stroke-width="0.8" stroke-linejoin="round"/></svg>
<div class="a" style="left:848px;top:93px;width:1px;height:28px;background:#D2D2D2"></div>
<svg style="left:852px;top:92px" width="30" height="30" viewBox="0 0 30 30"><path d="M12 22.8H5a1.5 1.5 0 0 1-1.5-1.5V4.8a1.5 1.5 0 0 1 1.5-1.5h18.5a1.5 1.5 0 0 1 1.5 1.5V12.5" fill="none" stroke="#6A6A6A" stroke-width="1.4"/><path d="M3.5 5.2h21.5" stroke="#6A6A6A" stroke-width="3.6"/><circle cx="6.6" cy="5.3" r="0.8" fill="#fff"/><circle cx="9.6" cy="5.3" r="0.8" fill="#fff"/><circle cx="12.6" cy="5.3" r="0.8" fill="#fff"/><circle cx="19.5" cy="19.3" r="8" fill="#fff"/><rect x="18" y="12" width="3" height="4" fill="#1798DD" transform="rotate(0 19.5 19.3)"/><rect x="18" y="12" width="3" height="4" fill="#1798DD" transform="rotate(45 19.5 19.3)"/><rect x="18" y="12" width="3" height="4" fill="#1798DD" transform="rotate(90 19.5 19.3)"/><rect x="18" y="12" width="3" height="4" fill="#1798DD" transform="rotate(135 19.5 19.3)"/><rect x="18" y="12" width="3" height="4" fill="#1798DD" transform="rotate(180 19.5 19.3)"/><rect x="18" y="12" width="3" height="4" fill="#1798DD" transform="rotate(225 19.5 19.3)"/><rect x="18" y="12" width="3" height="4" fill="#1798DD" transform="rotate(270 19.5 19.3)"/><rect x="18" y="12" width="3" height="4" fill="#1798DD" transform="rotate(315 19.5 19.3)"/><circle cx="19.5" cy="19.3" r="5.6" fill="#1798DD"/><circle cx="19.5" cy="19.3" r="2.3" fill="#fff"/></svg>
<!-- code frame -->
<div class="a" style="left:265px;top:124px;width:844px;height:492px;border:1px solid #8A98AD;background:#fff"></div>
<div class="a" style="left:266px;top:125px;width:67px;height:473px;background:#F3F4F7;border-right:1px solid #A8B0BD"></div>
<svg style="left:298px;top:413px" width="14" height="14" viewBox="0 0 14 14"><rect width="14" height="14" rx="1" fill="#13A0E2"/><circle cx="3.5" cy="4" r="1.8" fill="#fff"/><path d="M1 13V10.5l3.5-2.5 2 1.5 3-3.5 3.5 3.5V13z" fill="#fff"/></svg>
<svg style="left:298px;top:429px" width="14" height="14" viewBox="0 0 14 14"><rect width="14" height="14" rx="1" fill="#13A0E2"/><circle cx="3.5" cy="4" r="1.8" fill="#fff"/><path d="M1 13V10.5l3.5-2.5 2 1.5 3-3.5 3.5 3.5V13z" fill="#fff"/></svg>
<svg style="left:298px;top:445px" width="14" height="14" viewBox="0 0 14 14"><rect width="14" height="14" rx="1" fill="#13A0E2"/><circle cx="3.5" cy="4" r="1.8" fill="#fff"/><path d="M1 13V10.5l3.5-2.5 2 1.5 3-3.5 3.5 3.5V13z" fill="#fff"/></svg>
<svg style="left:298px;top:509px" width="14" height="14" viewBox="0 0 14 14"><rect width="14" height="14" rx="1" fill="#13A0E2"/><circle cx="3.5" cy="4" r="1.8" fill="#fff"/><path d="M1 13V10.5l3.5-2.5 2 1.5 3-3.5 3.5 3.5V13z" fill="#fff"/></svg>
<div class="a" style="left:318px;top:160px;width:9px;height:9px;border:1px solid #8A96A8;background:#F3F4F7"></div>
<div class="a" style="left:320px;top:164px;width:6px;height:1px;background:#8A96A8"></div>
<div class="a" style="left:322px;top:171px;width:1px;height:145px;background:#8A96A8"></div>
<div class="a" style="left:322px;top:316px;width:6px;height:1px;background:#8A96A8"></div>
<div class="a" style="left:318px;top:336px;width:9px;height:9px;border:1px solid #8A96A8;background:#F3F4F7"></div>
<div class="a" style="left:320px;top:340px;width:6px;height:1px;background:#8A96A8"></div>
<div class="a" style="left:322px;top:347px;width:1px;height:49px;background:#8A96A8"></div>
<div class="a" style="left:322px;top:396px;width:6px;height:1px;background:#8A96A8"></div>
<div class="a" style="left:318px;top:416px;width:9px;height:9px;border:1px solid #8A96A8;background:#F3F4F7"></div>
<div class="a" style="left:320px;top:420px;width:6px;height:1px;background:#8A96A8"></div>
<div class="a" style="left:322px;top:427px;width:1px;height:65px;background:#8A96A8"></div>
<div class="a" style="left:322px;top:492px;width:6px;height:1px;background:#8A96A8"></div>
<div class="a" style="left:318px;top:512px;width:9px;height:9px;border:1px solid #8A96A8;background:#F3F4F7"></div>
<div class="a" style="left:320px;top:516px;width:6px;height:1px;background:#8A96A8"></div>
<div class="a" style="left:322px;top:523px;width:1px;height:65px;background:#8A96A8"></div>
<div class="a" style="left:322px;top:588px;width:6px;height:1px;background:#8A96A8"></div>
<!-- code content -->
<div class="a" style="left:266px;top:125px;width:829px;height:473px;overflow:hidden">
<div class="a" style="left:1px;top:-1px;line-height:16px;white-space:pre;font-size:11.5px;-webkit-text-stroke:0.15px #000">1
2
3
4
5
6
7
8
9
10
11
12
13
14
15
16
17
18
19
20
21
22
23
24
25
26
27
28
29
30</div>
<div class="a code" style="left:69px;top:0"><span class="c">//If you are interested in scripting, this is the SimpleTest_Sample test written in Javascript.</span>

<span class="k">function</span> Main() {
  OpenWebStore(<span class="s">"http://services.smartbear.com/samples/TestComplete14/smartstore"</span>);

  FindProduct(<span class="s">"Solar"</span>);
  AddToCart();
  VerifyProductPrice(<span class="s">"969.0"</span>);
  RemoveFromCart();

  CloseBrowser();
}

<span class="k">function</span> OpenWebStore(url) {
  <span class="c">//Launch the Internet Explorer and navigate to a webpage</span>
  <span class="t">Browsers</span>.Item(btIExplorer).Run(url);
}

<span class="k">function</span> FindProduct(productName) {
  <span class="t">Aliases</span>.Browser.FrontPage.FrontPageSearchBox.SetText(productName);
  <span class="t">Aliases</span>.Browser.FrontPage.SearchButton.ClickButton();
  <span class="t">Aliases</span>.Browser.SearchPage.FoundProduct.Click();
}

<span class="k">function</span> AddToCart() {
  <span class="c">//Wait until the web page is loaded completely to ensure the next click will be processed correctly by the web page</span>
  <span class="t">Aliases</span>.Browser.ProductPage.Wait();
  <span class="t">Aliases</span>.Browser.ProductPage.AddToCartButton.ClickButton();
}
</div>
<div class="a" style="left:712px;top:0;width:1px;height:473px;background:#000"></div>
</div>

<div class="a" style="left:1095px;top:125px;width:14px;height:473px;background:#F3F4F6"></div>
<div class="a" style="left:1098px;top:142px;width:11px;height:296px;background:#B6BDCA"></div>
<svg style="left:1100px;top:131px" width="7" height="4"><path d="M0 4h7L3.5 0z" fill="#8A94A6"/></svg>
<svg style="left:1100px;top:588px" width="7" height="4"><path d="M0 0h7L3.5 4z" fill="#6E7A8C"/></svg>
<div class="a" style="left:266px;top:598px;width:829px;height:17px;background:#F3F4F6"></div>
<div class="a" style="left:283px;top:601px;width:167px;height:12px;background:#B6BDCA"></div>
<svg style="left:272px;top:604px" width="4" height="7"><path d="M3.5 0v7L0 3.5z" fill="#6E7A8C"/></svg>
<svg style="left:1084px;top:604px" width="4" height="7"><path d="M0 0v7l3.5-3.5z" fill="#6E7A8C"/></svg>
<div class="a" style="left:1095px;top:598px;width:14px;height:17px;background:#EEEEEF"></div>
<!-- bottom bar -->
<div class="a" style="left:265px;top:623px;width:848px;height:24px;background:#D6DBE3"></div>
<svg style="left:272px;top:626px" width="20" height="18" viewBox="0 0 20 18"><rect x="0" y="4" width="13" height="13" fill="#1798DD"/><circle cx="3.5" cy="7.5" r="1.6" fill="#fff"/><path d="M1 16v-2.5l3.5-2.5 2 1.5 3-3 3.5 3.5V16z" fill="#fff"/><path d="M12.5 9.5V2.8a2 2 0 0 1 4 0V10a1.2 1.2 0 0 1-2.4 0V4" fill="none" stroke="#6A6A6A" stroke-width="1.3"/></svg>
<div class="a u" style="left:294px;top:629px">Test Visualizer</div>
<svg style="left:1099px;top:631px" width="9" height="9" viewBox="0 0 9 9"><rect x="3.5" y="0.5" width="5" height="5" fill="none" stroke="#5C6675"/><rect x="0.5" y="3.5" width="5" height="5" fill="#D6DBE3" stroke="#5C6675"/></svg>
</body></html>
